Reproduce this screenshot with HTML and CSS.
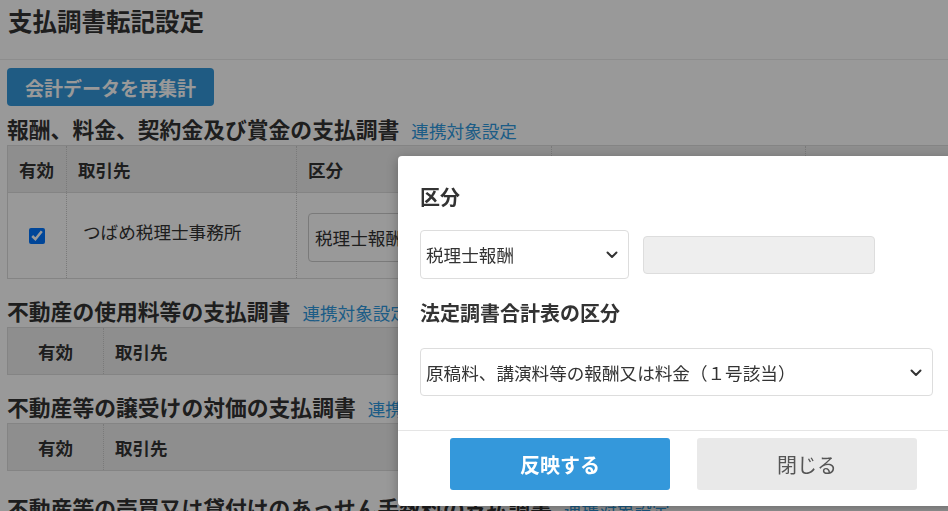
FILE: index.html
```html
<!DOCTYPE html>
<html lang="ja">
<head>
    <meta charset="UTF-8">
    <meta name="viewport" content="width=device-width, initial-scale=1.0">
    <title>支払調書転記設定</title>
    <link rel="stylesheet" href="styles.css">
</head>
<body>
    <div class="page-header">
        <h1>支払調書転記設定</h1>
    </div>

    <div class="content">
        <button class="btn-recalc">会計データを再集計</button>

        <!-- 報酬 -->
        <h2 class="section-title">報酬、料金、契約金及び賞金の支払調書<a href="#" class="link">連携対象設定</a></h2>
        <table class="doc-table">
            <colgroup>
                <col style="width: 59px">
                <col style="width: 230px">
                <col style="width: 255px">
                <col style="width: 254px">
                <col>
            </colgroup>
            <tr class="head">
                <th>有効</th>
                <th>取引先</th>
                <th>区分</th>
                <th>法定調書合計表の区分</th>
                <th></th>
            </tr>
            <tr class="row">
                <td class="center"><input type="checkbox" checked></td>
                <td class="name">つばめ税理士事務所</td>
                <td>
                    <div class="select-box">
                        <span>税理士報酬</span>
                    </div>
                </td>
                <td></td>
                <td></td>
            </tr>
        </table>

        <!-- 不動産の使用料 -->
        <h2 class="section-title">不動産の使用料等の支払調書<a href="#" class="link">連携対象設定</a></h2>
        <table class="doc-table">
            <colgroup>
                <col style="width: 96px">
                <col>
            </colgroup>
            <tr class="head">
                <th class="center">有効</th>
                <th>取引先</th>
            </tr>
        </table>

        <!-- 不動産の譲受け -->
        <h2 class="section-title">不動産等の譲受けの対価の支払調書<a href="#" class="link">連携対象設定</a></h2>
        <table class="doc-table">
            <colgroup>
                <col style="width: 96px">
                <col>
            </colgroup>
            <tr class="head">
                <th class="center">有効</th>
                <th>取引先</th>
            </tr>
        </table>

        <h2 class="section-title last">不動産等の売買又は貸付けのあっせん手数料の支払調書<a href="#" class="link">連携対象設定</a></h2>
    </div>

    <div class="overlay"></div>

    <div class="modal">
        <div class="modal-body">
            <h3>区分</h3>
            <div class="field-row">
                <div class="select-wrap small">
                    <select>
                        <option>税理士報酬</option>
                    </select>
                    <svg class="chevron" width="12" height="8" viewBox="0 0 12 8"><path d="M1.5 1.5 L6 6 L10.5 1.5" fill="none" stroke="#333" stroke-width="2" stroke-linecap="round" stroke-linejoin="round"/></svg>
                </div>
                <input type="text" class="input-disabled" disabled>
            </div>

            <h3 class="second">法定調書合計表の区分</h3>
            <div class="select-wrap wide">
                <select>
                    <option>原稿料、講演料等の報酬又は料金（１号該当）</option>
                </select>
                <svg class="chevron" width="12" height="8" viewBox="0 0 12 8"><path d="M1.5 1.5 L6 6 L10.5 1.5" fill="none" stroke="#333" stroke-width="2" stroke-linecap="round" stroke-linejoin="round"/></svg>
            </div>
        </div>
        <div class="modal-footer">
            <button class="btn-apply">反映する</button>
            <button class="btn-close">閉じる</button>
        </div>
    </div>
</body>
</html>
```

FILE: styles.css
```css
body {
    margin: 0;
    padding: 0;
    font-family: "Noto Sans CJK JP", "Noto Sans", sans-serif;
    color: #333;
    background: #fff;
    overflow: hidden;
}
/* Header */
.page-header {
    height: 60px;
    box-sizing: border-box;
    border-bottom: 1px solid #ececec;
    padding: 6px 8px 0;
}
.page-header h1 {
    margin: 0;
    font-size: 24.5px;
    line-height: 30px;
    font-weight: bold;
}
.content {
    padding: 0 7px;
}
.btn-recalc {
    margin-top: 8px;
    width: 207px;
    height: 38px;
    background: #3498db;
    color: #fff;
    border: none;
    border-radius: 4px;
    font-family: inherit;
    font-size: 19px;
    font-weight: bold;
    padding: 0;
}
/* Sections */
.section-title {
    margin: 19px 0 0;
    font-size: 21.8px;
    line-height: 26px;
    font-weight: bold;
    white-space: nowrap;
}
.btn-recalc + .section-title {
    margin-top: 10px;
}
.section-title.last {
    margin-top: 24px;
}
.section-title .link {
    margin-left: 12px;
    font-size: 17.6px;
    font-weight: normal;
    color: #2f9ae0;
    text-decoration: none;
}
.doc-table {
    width: 980px;
    margin-top: 1px;
    border-collapse: collapse;
    table-layout: fixed;
    border: 1px solid #ddd;
}
.doc-table th,
.doc-table td {
    padding: 0 11px;
    text-align: left;
    border-left: 1px dotted #ccc;
}
.doc-table tr.head {
    height: 47px;
    background: #ededed;
}
.doc-table th {
    font-size: 17.5px;
    font-weight: bold;
}
.doc-table tr.row {
    height: 86px;
    border-top: 1px solid #ddd;
}
.doc-table .center {
    text-align: center;
}
.doc-table td.name {
    font-size: 17.6px;
    padding-left: 16px;
    padding-bottom: 8px;
}
.doc-table input[type="checkbox"] {
    width: 16px;
    height: 16px;
    margin: 6px 0 0;
}
.select-box {
    height: 47px;
    border: 1px solid #ccc;
    border-radius: 4px;
    display: flex;
    align-items: center;
    padding-left: 6px;
    font-size: 17.6px;
    margin-top: 4px;
}
/* Overlay and dialog */
.overlay {
    position: fixed;
    inset: 0;
    background: rgba(0, 0, 0, 0.4);
}
.modal {
    position: fixed;
    left: 398px;
    top: 156px;
    width: 560px;
    background: #fff;
    border-radius: 4px;
    box-shadow: 0 3px 12px rgba(0, 0, 0, 0.3);
}
.modal-body {
    padding: 27px 22px 34px;
    border-bottom: 1px solid #e5e5e5;
}
.modal-body h3 {
    margin: 0 0 19px;
    font-size: 20px;
    line-height: 28px;
    font-weight: bold;
}
.modal-body h3.second {
    margin-bottom: 21px;
}
.field-row {
    display: flex;
    align-items: center;
    gap: 14px;
    margin-bottom: 20px;
}
.select-wrap {
    position: relative;
}
.select-wrap select {
    appearance: none;
    width: 100%;
    height: 49px;
    background: #fff;
    border: 1px solid #ddd;
    border-radius: 4px;
    padding: 0 30px 0 5px;
    font-family: inherit;
    font-size: 17.6px;
    color: #333;
}
.select-wrap .chevron {
    position: absolute;
    right: 11px;
    top: 21px;
    pointer-events: none;
}
.select-wrap.small {
    width: 209px;
}
.select-wrap.wide {
    width: 513px;
}
.select-wrap.wide select {
    height: 48px;
}
.input-disabled {
    width: 232px;
    height: 38px;
    box-sizing: border-box;
    background: #eee;
    border: 1px solid #ddd;
    border-radius: 4px;
}
.modal-footer {
    display: flex;
    gap: 27px;
    padding: 7px 0 16px 52px;
}
.modal-footer button {
    width: 220px;
    height: 52px;
    border: none;
    border-radius: 3px;
    font-family: inherit;
    font-size: 20px;
}
.btn-apply {
    background: #3498db;
    color: #fff;
    font-weight: bold;
}
.btn-close {
    background: #e9e9e9;
    color: #555;
}
```
